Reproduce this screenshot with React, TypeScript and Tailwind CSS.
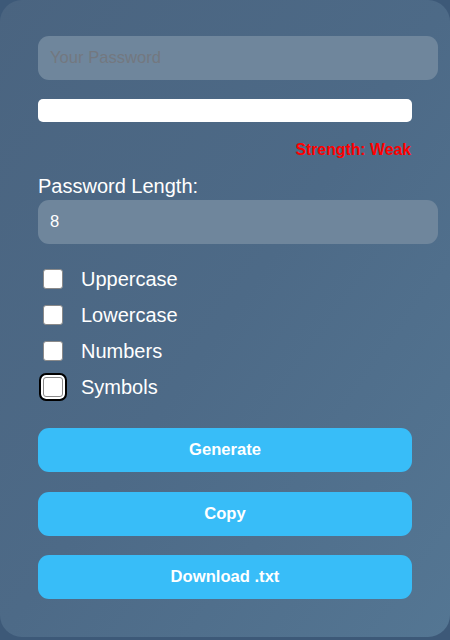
import React from "react";

const options = ["Uppercase", "Lowercase", "Numbers", "Symbols"];

export default function App() {
  return (
    <div
      className="w-[450px] h-[640px] bg-[#3d5978] overflow-hidden"
      style={{ fontFamily: '"Liberation Sans", Arial, sans-serif' }}
    >
      <div className="w-[450px] h-[637px] rounded-[22px] bg-gradient-to-br from-[#4a6480] via-[#4d6a87] to-[#547693] px-[38px] pt-[36px] flex flex-col">
        <div className="w-[400px] h-[44px] rounded-[11px] bg-[#6f869c] flex items-center px-[12px]">
          <span className="text-[16.6px] text-[#737880]">Your Password</span>
        </div>
        <div className="mt-[19px] h-[23px] w-full bg-white rounded-[5px]" />
        <div className="mt-[20px] h-[16px] text-right text-[15.8px] leading-[16px] font-bold text-[#ff0000] pr-[1px]">
          Strength: Weak
        </div>
        <div className="mt-[18px] text-[20px] leading-[21px] text-white">
          Password Length:
        </div>
        <div className="mt-[3px] w-[400px] h-[44px] rounded-[11px] bg-[#6f869c] flex items-center px-[12px]">
          <span className="text-[16.6px] text-white">8</span>
        </div>
        <div className="mt-[17px] flex flex-col">
          {options.map((o, i) => (
            <div key={o} className="h-[36px] flex items-center">
              <span
                className={
                  "ml-[5px] w-[20px] h-[20px] bg-white border border-[#8a8a8a] rounded-[3px] " +
                  (i === 3 ? "outline-2 outline-black outline-offset-[2px] shadow-[0_0_0_2px_white]" : "")
                }
              />
              <span className="ml-[18px] text-[20px] text-white leading-[22px]">{o}</span>
            </div>
          ))}
        </div>
        <button className="mt-[23px] h-[44px] w-full rounded-[11px] bg-[#38bdf8] text-white font-bold text-[16.6px]">
          Generate
        </button>
        <button className="mt-[20px] h-[44px] w-full rounded-[11px] bg-[#38bdf8] text-white font-bold text-[16.6px]">
          Copy
        </button>
        <button className="mt-[19px] h-[44px] w-full rounded-[11px] bg-[#38bdf8] text-white font-bold text-[16.6px]">
          Download .txt
        </button>
      </div>
    </div>
  );
}
